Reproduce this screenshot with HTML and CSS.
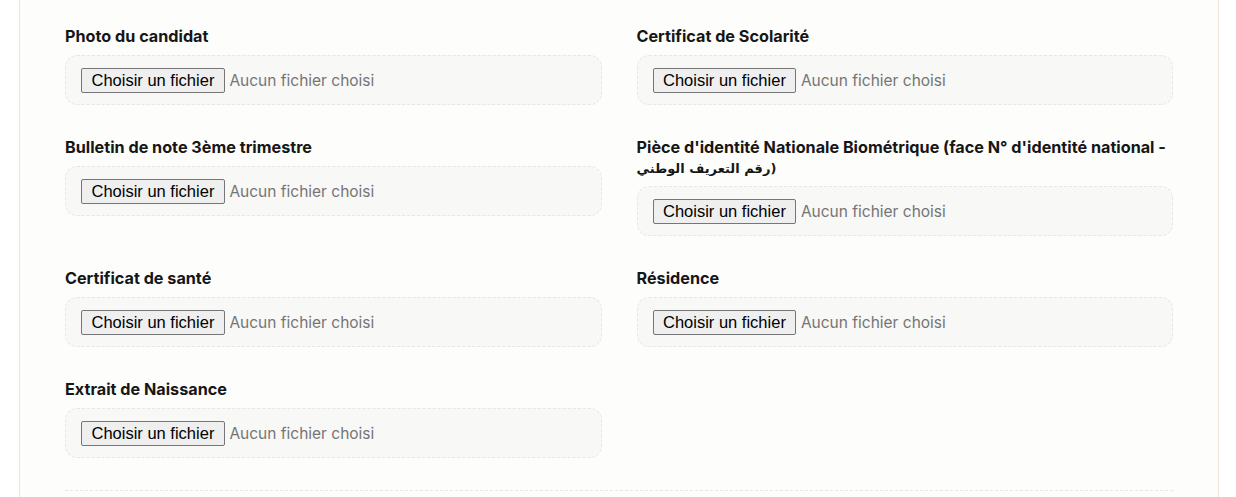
FILE: index.html
```html
<!DOCTYPE html>
<html lang="fr">
<head>
<meta charset="utf-8">
<title>Documents</title>
<link rel="stylesheet" href="styles.css">
</head>
<body>
<div class="card">
  <div class="grid">
    <div class="field">
      <div class="label">Photo du candidat</div>
      <div class="upload"><span class="btn">Choisir un fichier</span><span class="none">Aucun fichier choisi</span></div>
    </div>
    <div class="field">
      <div class="label">Certificat de Scolarité</div>
      <div class="upload"><span class="btn">Choisir un fichier</span><span class="none">Aucun fichier choisi</span></div>
    </div>
    <div class="field">
      <div class="label">Bulletin de note 3ème trimestre</div>
      <div class="upload"><span class="btn">Choisir un fichier</span><span class="none">Aucun fichier choisi</span></div>
    </div>
    <div class="field">
      <div class="label">Pièce d'identité Nationale Biométrique (face N° d'identité national - <span class="ar">رقم التعريف الوطني)</span></div>
      <div class="upload"><span class="btn">Choisir un fichier</span><span class="none">Aucun fichier choisi</span></div>
    </div>
    <div class="field">
      <div class="label">Certificat de santé</div>
      <div class="upload"><span class="btn">Choisir un fichier</span><span class="none">Aucun fichier choisi</span></div>
    </div>
    <div class="field">
      <div class="label">Résidence</div>
      <div class="upload"><span class="btn">Choisir un fichier</span><span class="none">Aucun fichier choisi</span></div>
    </div>
    <div class="field">
      <div class="label">Extrait de Naissance</div>
      <div class="upload"><span class="btn">Choisir un fichier</span><span class="none">Aucun fichier choisi</span></div>
    </div>
  </div>
  <div class="divider"></div>
</div>
</body>
</html>
```
FILE: styles.css
```css
html, body {
  margin: 0;
  padding: 0;
  background: #ffffff;
}
body {
  font-family: Inter, "DejaVu Sans", sans-serif;
  color: #1a1a1a;
  height: 497px;
  overflow: hidden;
}
.card {
  margin-left: 19px;
  width: 1108px;
  padding: 26px 45px 0 45px;
  border-left: 1px solid #efe5d6;
  border-right: 1px solid #efe5d6;
  background: #fdfdfc;
  min-height: 497px;
  box-sizing: content-box;
}
.grid {
  display: grid;
  grid-template-columns: 1fr 1fr;
  column-gap: 35px;
  row-gap: 32px;
  align-items: start;
}
.label {
  font-size: 16.2px;
  font-weight: 700;
  line-height: 20px;
  margin-bottom: 9px;
  color: #161616;
}
.ar {
  font-family: "DejaVu Sans", sans-serif;
  font-size: 13px;
  font-weight: 700;
  line-height: 1;
}
.upload {
  height: 50px;
  box-sizing: border-box;
  border: 1px dashed #ece7dc;
  border-radius: 12px;
  background: #f8f8f6;
  padding: 0 15px;
  display: flex;
  align-items: center;
}
.btn {
  font-family: "Liberation Sans", Arial, sans-serif;
  font-size: 16.5px;
  line-height: 21px;
  color: #000;
  background: #efefef;
  border: 1px solid #767676;
  border-radius: 2px;
  padding: 1px 9.5px;
  margin-right: 4.5px;
}
.none {
  font-size: 15.5px;
  color: #757575;
}
.divider {
  margin-top: 32px;
  border-top: 1px dashed #ebe7df;
}
```
